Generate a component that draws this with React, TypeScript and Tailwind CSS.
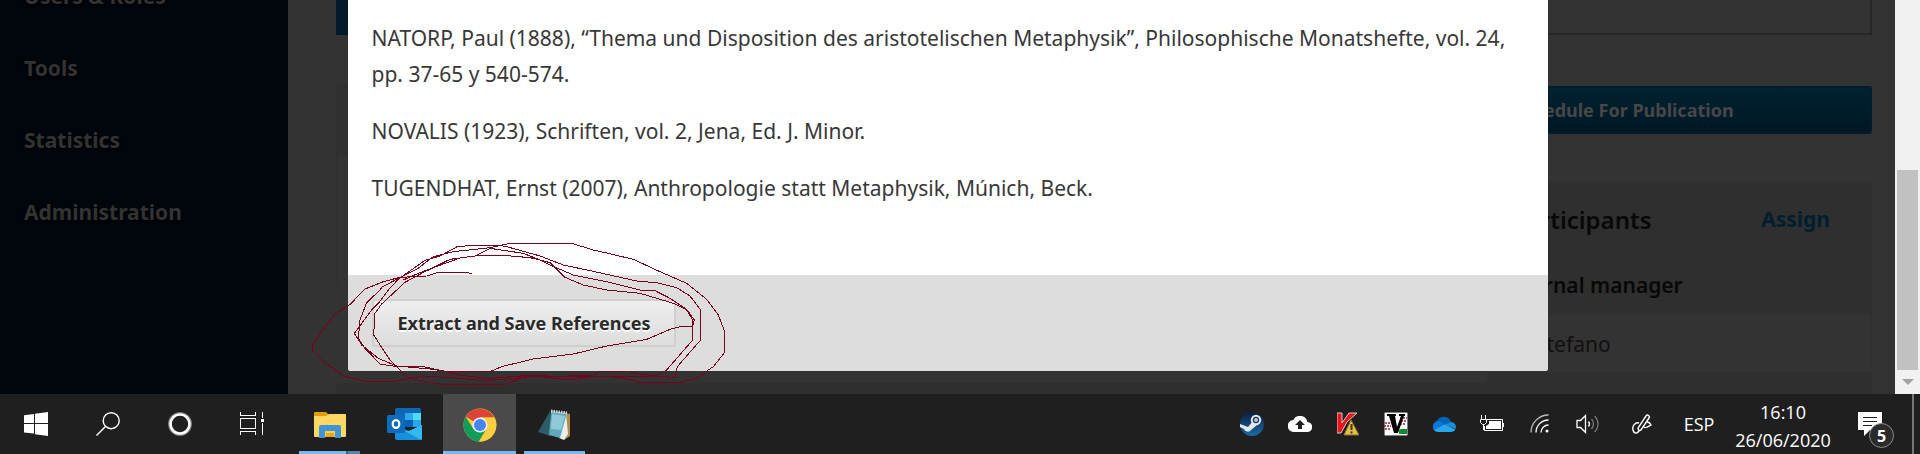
import React from 'react';

const sideLinks = ['Users & Roles', 'Tools', 'Statistics', 'Administration'];

const references = [
  'NATORP, Paul (1888), “Thema und Disposition des aristotelischen Metaphysik”, Philosophische Monatshefte, vol. 24, pp. 37-65 y 540-574.',
  'NOVALIS (1923), Schriften, vol. 2, Jena, Ed. J. Minor.',
  'TUGENDHAT, Ernst (2007), Anthropologie statt Metaphysik, Múnich, Beck.',
];

const Sidebar: React.FC = () => (
  <nav className="w-72 shrink-0 bg-[#00060c] pl-6 flex flex-col">
    <div className="-mt-[39px] flex flex-col">
      {sideLinks.map((label) => (
        <a
          key={label}
          href="#"
          className="h-[72px] flex items-center text-[21px] font-bold text-[#333333] [text-shadow:0_2px_2px_#000]"
        >
          {label}
        </a>
      ))}
    </div>
  </nav>
);

const PageContent: React.FC = () => (
  <main className="flex-1 flex pl-12 pr-[23px] bg-[#333333]">
    <section className="flex-1 flex flex-col">
      <div className="h-[35px] bg-[#001a29]" />
      <div className="mt-12 h-[204px] border border-[#2f2f2f] rounded-sm">
        <div className="h-[72px] bg-[#303030]" />
      </div>
      <div className="mt-24 flex-1 bg-[#2f2f2f]" />
    </section>
    <aside className="w-[385px] shrink-0 flex flex-col">
      <div className="h-[35px] border-r-2 border-b-2 border-[#262626]" />
      <button className="mt-[51px] h-12 px-6 text-left text-[18px] font-bold text-[#474747] rounded-[3px] border-2 border-[#001d2e] bg-linear-to-b from-[#002231] to-[#001724]">
        Schedule For Publication
      </button>
      <div className="mt-12 h-[132px] bg-[#2f2f2f] pt-0.5 pl-6 pr-[42px]">
        <div className="h-[72px] flex items-center justify-between">
          <h2 className="text-[24px] font-semibold text-[#080808]">Participants</h2>
          <a href="#" className="text-[21px] font-bold text-[#001f2e]">Assign</a>
        </div>
        <h3 className="h-[60px] flex items-center text-[21px] font-semibold text-[#080808]">Journal manager</h3>
      </div>
      <div className="h-[58px] pl-12 pt-1 flex items-center text-[21px] text-[#111111] border-r border-[#2f2f2f]">Stefano</div>
      <div className="flex-1 bg-[#2f2f2f]" />
    </aside>
  </main>
);

const Scrollbar: React.FC = () => (
  <div className="w-[25px] shrink-0 bg-[#f1f1f1] flex flex-col items-center justify-end">
    <div className="w-[21px] h-[200px] bg-[#c1c1c1]" />
    <div className="h-6 flex items-center">
      <svg width="12" height="6" viewBox="0 0 12 6" fill="#a3a3a3"><path d="M0 0h12L6 6z" /></svg>
    </div>
  </div>
);

const Scribble: React.FC = () => (
  <svg
    className="absolute -left-12 -bottom-[29px] pointer-events-none"
    width="440"
    height="170"
    viewBox="0 0 1320 510"
    fill="none"
    stroke="#7b0019"
    strokeWidth="3"
    shapeRendering="crispEdges"
  >
    {/* outer loop */}
    <path d="M516 130L490 127H415L380 138L300 142L250 155L195 177L175 197L152 222L104 253L70 298L38 345V363L75 398L100 415L130 438L195 454H285L370 438L440 442L560 452L700 440L860 437L960 442L1020 458H1140L1190 445L1210 430L1240 410L1272 370L1274 305L1255 255L1220 208L1160 160L1080 125L1000 88L920 69L880 60L815 40H630L570 53L460 65L400 80L350 118L300 142L265 180L235 220L215 240L163 310L185 345L235 385L290 408L400 418L440 425" />
    {/* middle loops */}
    <path d="M440 425L480 435L560 446L690 436L790 440L870 440L900 425L980 424L1020 432L1060 437L1125 443L1132 410L1202 330V240L1170 198L1130 173L1065 157L1020 155L870 122L790 105L720 78L620 50L600 46H510L470 51L420 78L375 91L310 137L245 172L240 180L200 218L180 270L175 325L195 355L240 402L290 410L370 410L440 425H570L605 410L625 405L700 387L820 372L920 348L950 343L1040 328L1110 298L1140 290L1178 288" />
    <path d="M1178 288L1183 270L1160 238L1110 205L1065 182L1020 180L920 155L820 135L750 105L720 90L670 70L570 55L525 78L450 88L365 130L315 157L245 222L225 250L221 315L250 360L270 390L320 440L365 454L425 464H610L690 435L805 450L870 440H1060L1100 420L1178 330V270L1160 240L1120 220L1070 205L1020 190L920 180L850 165L795 142L750 98L720 90L690 83L610 76H540L480 84L400 113L350 132L310 150" />
  </svg>
);

const ReferencesModal: React.FC = () => (
  <div className="absolute top-0 left-0 right-[25px] flex justify-center">
    <form className="relative w-[1200px] flex flex-col rounded-b-[3px] bg-white" onSubmit={(e) => e.preventDefault()}>
      <div className="h-[275px] px-6 pt-5 flex flex-col gap-[21px] text-[21px] leading-9 text-[#383838]">
        {references.map((text) => (
          <p key={text}>{text}</p>
        ))}
      </div>
      <div className="h-24 pl-6 flex items-center bg-[#dddddd] rounded-b-[3px]">
        <button className="h-12 px-6 text-[18px] font-bold text-[#2a2a2a] border-2 border-[#cfcfcf] rounded-[3px] bg-linear-to-b from-[#eeeeee] to-[#dddddd] [text-shadow:0_2px_0_#fff]">
          Extract and Save References
        </button>
      </div>
      <Scribble />
    </form>
  </div>
);

const StartIcon = () => (
  <svg width="24" height="24" viewBox="0 0 24 24" fill="#fff">
    <path d="M0 3.2L10 1.9V11H0zM11 1.8L24 0v11H11zM0 12h10v9.6L0 20.4zM11 12h13v12l-13-1.8z" />
  </svg>
);

const SearchIcon = () => (
  <svg width="24" height="24" viewBox="0 0 24 24" fill="none" stroke="#fff" strokeWidth="1.4">
    <circle cx="15.2" cy="8.7" r="8" />
    <path d="M9.5 14.5L.5 23.5" />
  </svg>
);

const CortanaIcon = () => (
  <svg width="24" height="24" viewBox="0 0 24 24" fill="none">
    <circle cx="12" cy="12" r="11" stroke="#777" strokeWidth="2" />
    <circle cx="12" cy="12" r="9.5" stroke="#fff" strokeWidth="2.6" />
  </svg>
);

const TaskViewIcon = () => (
  <svg width="24" height="24" viewBox="0 0 24 24" fill="none" stroke="#fff" shapeRendering="crispEdges">
    <path d="M.5 0v3.5h15V0M.5 6.5h15v10H.5zM.5 23v-3.5h15V23M22.5 0v6M22.5 11v12" />
    <path d="M21 7h3v3h-3z" fill="#fff" stroke="none" />
  </svg>
);

const ExplorerIcon = () => (
  <svg width="32" height="28" viewBox="0 0 32 28">
    <path d="M0 2a1 1 0 011-1h11l3 3h16v4H0z" fill="#e0a00a" />
    <path d="M0 5h12l3-2h16a1 1 0 011 1v21a1 1 0 01-1 1H1a1 1 0 01-1-1z" fill="#ffd863" />
    <path d="M5 27V16a2 2 0 012-2h18a2 2 0 012 2v11h-6v-7H11v7z" fill="#3f94d8" />
    <path d="M11 20h10v6H11z" fill="#ffce45" />
    <path d="M12 22h8v4h-8z" fill="#e8a91c" />
  </svg>
);

const OutlookIcon = () => (
  <svg width="36" height="33" viewBox="0 0 36 33">
    <path d="M10 0h22a2 2 0 012 2v16H8V2a2 2 0 012-2z" fill="#1066b5" />
    <path d="M18 5h8v7h-8z" fill="#32a9e7" />
    <path d="M26 5h8v7h-8z" fill="#50d9ff" />
    <path d="M18 12h8v7h-8z" fill="#0364b8" />
    <path d="M26 12h8v7h-8z" fill="#28a8ea" />
    <path d="M8 17l14 6 13-6v13a2 2 0 01-2 2H10a2 2 0 01-2-2z" fill="#1490df" />
    <path d="M35 17v13a2 2 0 01-1 2L18 23l4 0z" fill="#35b8f1" />
    <rect y="7" width="18" height="18" rx="1.5" fill="#0f6cbd" />
    <ellipse cx="9" cy="16" rx="3.3" ry="3.9" fill="none" stroke="#fff" strokeWidth="2.2" />
  </svg>
);

const ChromeIcon = () => (
  <svg width="34" height="34" viewBox="0 0 34 34">
    <circle cx="17" cy="17" r="16.5" fill="#ffcd40" />
    <path d="M17 17L2.7 8.7A16.5 16.5 0 0131.3 9.5H17z" fill="#db4437" />
    <path d="M2.7 8.7L10.5 21 23.5 21 16 33.5A16.5 16.5 0 012.7 8.7z" fill="#0f9d58" />
    <path d="M31.4 9.5H17l6.5 11.5L16 33.5A16.5 16.5 0 0031.4 9.5z" fill="#ffcd40" />
    <circle cx="17" cy="17" r="7.6" fill="#f1f1f1" />
    <circle cx="17" cy="17" r="6" fill="#4285f4" />
  </svg>
);

const NotepadIcon = () => (
  <svg width="34" height="32" viewBox="0 0 34 32">
    <path d="M27 4l5 1v22l-6 4z" fill="#b58b4a" />
    <path d="M28 3l2 22-4 6-5-2z" fill="#e9eef0" />
    <path d="M12 2L0 23l12 4z" fill="#2d5c68" />
    <path d="M13 2l16 2-7 25-11-3z" fill="#5fa9bb" />
    <path d="M14 5l13 2-4 14-10-1z" fill="#b4e0e8" opacity=".6" />
    <path d="M13 2l16 2" stroke="#d9d9d9" strokeWidth="3" strokeDasharray="1.5 1" />
  </svg>
);

const SteamIcon = () => (
  <svg width="24" height="24" viewBox="0 0 24 24">
    <defs>
      <linearGradient id="steam" x1="0" y1="0" x2="0" y2="1">
        <stop offset="0" stopColor="#0b1c40" />
        <stop offset="1" stopColor="#1b6ca6" />
      </linearGradient>
    </defs>
    <circle cx="12" cy="12" r="12" fill="url(#steam)" />
    <path d="M0 12l8 3 5-6 4 4-6 5a4 4 0 01-7-1l-4-2z" fill="#e4e8ee" />
    <circle cx="16" cy="8" r="4.2" fill="#1c3560" stroke="#e4e8ee" strokeWidth="2" />
    <circle cx="16" cy="8" r="2" fill="#b9c4d4" />
  </svg>
);

const CloudUploadIcon = () => (
  <svg width="24" height="16" viewBox="0 0 24 16">
    <path d="M19.4 6A7.5 7.5 0 005.3 4 6 6 0 006 16h13a5 5 0 00.4-10z" fill="#fff" />
    <path d="M12 4l5 5h-3v4h-4V9H7z" fill="#1f1f1f" />
  </svg>
);

const KasperskyIcon = () => (
  <svg width="22" height="24" viewBox="0 0 22 24">
    <path d="M0 1h5v10l7-10h8L10 10l-6 11H0z" fill="#e8151c" stroke="#d9c9c9" />
    <path d="M14 8l8 15H7z" fill="#e2c04a" stroke="#8a722a" />
    <path d="M14.500 12v6M14.500 19.500v2" stroke="#3c3008" strokeWidth="2" />
  </svg>
);

const VIcon = () => (
  <svg width="24" height="24" viewBox="0 0 24 24">
    <path d="M0 0h24v24H0z" fill="#fff" stroke="#000" />
    <path d="M1 11h6M0 14h7M1 17h5M16 6h7M17 9h6M16 12h6" stroke="#a01f35" strokeWidth="1.5" strokeDasharray="2 1" />
    <path d="M3 2h9v2h-1l2 11 4-11h-2V2h6v2h-1l-6 17h-4L5 4H3z" fill="#000" />
    <path d="M15 18l2-1h6v5h-8z" fill="#128a2f" />
  </svg>
);

const OneDriveIcon = () => (
  <svg width="24" height="16" viewBox="0 0 24 16">
    <path d="M5 5a7.5 7.5 0 0114 1l-7 5-9-5z" fill="#0364b8" />
    <path d="M4 5.5A6 6 0 019 6l8 5-14 4A5.5 5.5 0 014 5.5z" fill="#0f78d4" />
    <path d="M13 8.5L19 6a5 5 0 014.5 7z" fill="#1490df" />
    <path d="M2 14l11-5.5 10.5 5A5 5 0 0119 16H6a6 6 0 01-4-2z" fill="#28a8ea" />
  </svg>
);

const BatteryIcon = () => (
  <svg width="24" height="18" viewBox="0 0 24 18" fill="none" stroke="#fff">
    <path d="M7 4.5h15.5v11H4.5V11M23.5 8v4" />
    <path d="M9 6h12v8H6v-3l3-2z" fill="#fff" stroke="none" />
    <path d="M1.5 0v4M5.5 0v4M.5 4.5h6v3l-2 2h-2l-2-2zM3.5 10v5" />
  </svg>
);

const WifiIcon = () => (
  <svg width="20" height="20" viewBox="0 0 20 20" fill="none" stroke="#fff" strokeWidth="1.3">
    <path d="M1 18.5A17.5 17.5 0 0118.5 1" stroke="#bbb" />
    <path d="M6 18.5A12.5 12.5 0 0118.5 6M11 18.5a7.5 7.5 0 017.5-7.5" />
    <circle cx="17" cy="17" r="1.5" fill="#fff" stroke="none" />
  </svg>
);

const VolumeIcon = () => (
  <svg width="24" height="20" viewBox="0 0 24 20" fill="none" stroke="#fff" strokeWidth="1.3">
    <path d="M1 6.5h3.5L9.5 1.5v17l-5-5H1z" />
    <path d="M12.5 7.5a4 4 0 010 5" />
    <path d="M15.5 5a7.5 7.5 0 010 10M18.5 2a11 11 0 010 16" stroke="#777" />
  </svg>
);

const PenIcon = () => (
  <svg width="20" height="21" viewBox="0 0 20 21" fill="none" stroke="#fff" strokeWidth="1.4">
    <path d="M7 17L6 14 14 2a1.8 1.8 0 013 2L9 16zM7 9c-4-1-7 3-6 7s4 4 6 1M12 13c2 2 5-1 7-2-1-2-2-3-4-3" />
  </svg>
);

const NotificationIcon = () => (
  <svg width="24" height="24" viewBox="0 0 24 24">
    <path d="M0 0h24v18H12l-6 6v-6H0z" fill="#fff" />
    <path d="M5 5.5h14M5 9.5h14M5 13.5h9" stroke="#1f1f1f" />
  </svg>
);

const trayIcons = [
  { label: 'Steam', Icon: SteamIcon },
  { label: 'Backup', Icon: CloudUploadIcon },
  { label: 'Antivirus', Icon: KasperskyIcon },
  { label: 'Editor', Icon: VIcon },
  { label: 'OneDrive', Icon: OneDriveIcon },
  { label: 'Battery', Icon: BatteryIcon },
  { label: 'Network', Icon: WifiIcon },
  { label: 'Volume', Icon: VolumeIcon },
];

const systemButtons = [
  { label: 'Start', Icon: StartIcon },
  { label: 'Search', Icon: SearchIcon },
  { label: 'Cortana', Icon: CortanaIcon },
  { label: 'Task view', Icon: TaskViewIcon },
];

const Taskbar: React.FC = () => (
  <footer className="h-[60px] flex bg-[#1f1f1f] text-[18px] text-white font-['Open_Sans',sans-serif]">
    {systemButtons.map(({ label, Icon }) => (
      <button key={label} aria-label={label} className="w-[72px] flex items-center justify-center">
        <Icon />
      </button>
    ))}
    <div className="pl-[5px] flex gap-0.5">
      <button aria-label="File Explorer" className="w-[73px] flex flex-col items-center">
        <span className="flex-1 flex items-center pt-1"><ExplorerIcon /></span>
        <span className="w-[61px] h-[3px] flex">
          <span className="flex-1 bg-[#76b9ed]" />
          <span className="w-3.5 bg-[#5486ad] border-l-2 border-[#3f5f78]" />
        </span>
      </button>
      <button aria-label="Outlook" className="w-[73px] flex items-center justify-center">
        <OutlookIcon />
      </button>
      <button aria-label="Chrome" className="w-[73px] flex flex-col items-center bg-[#4a4a4a]">
        <span className="flex-1 flex items-center pt-1"><ChromeIcon /></span>
        <span className="w-full h-[3px] bg-[#76b9ed]" />
      </button>
      <button aria-label="Notepad" className="w-[73px] flex flex-col items-center">
        <span className="flex-1 flex items-center pt-1"><NotepadIcon /></span>
        <span className="w-[61px] h-[3px] bg-[#76b9ed]" />
      </button>
    </div>
    <div className="ml-auto flex">
      {trayIcons.map(({ label, Icon }) => (
        <button key={label} aria-label={label} className="w-12 flex items-center justify-center">
          <Icon />
        </button>
      ))}
      <button aria-label="Windows Ink" className="w-[60px] flex items-center justify-center"><PenIcon /></button>
      <button className="w-[54px]">ESP</button>
      <button className="w-[114px] pt-1 flex flex-col items-center leading-7">
        <span>16:10</span>
        <span>26/06/2020</span>
      </button>
      <button aria-label="Notifications" className="relative w-[72px] flex items-center pl-[18px]">
        <NotificationIcon />
        <span className="absolute left-[29px] top-[29px] size-[25px] rounded-full border border-[#8a8a8a] bg-[#2b2b2b] flex items-center justify-center text-[16px] font-bold">
          5
        </span>
      </button>
      <button aria-label="Show desktop" className="w-2 border-l-2 border-[#777777]" />
    </div>
  </footer>
);

export default function App() {
  return (
    <div className="flex flex-col overflow-hidden font-['Noto_Sans',sans-serif]">
      <div className="relative h-[394px] flex">
        <Sidebar />
        <PageContent />
        <Scrollbar />
        <ReferencesModal />
      </div>
      <Taskbar />
    </div>
  );
}
